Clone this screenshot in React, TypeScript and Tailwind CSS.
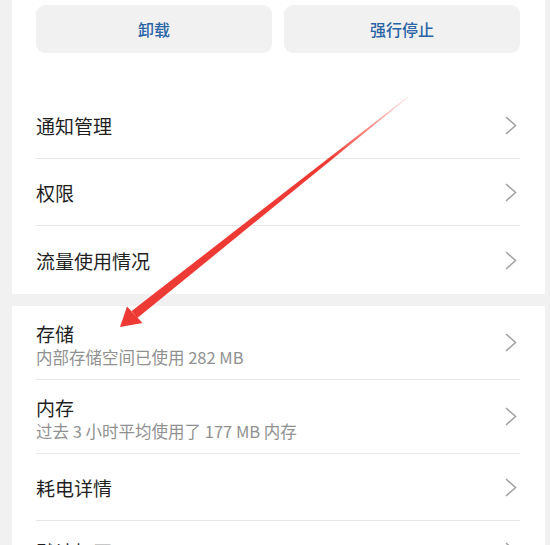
import React from "react";

const FONT = '"Noto Sans CJK SC", "Noto Sans", sans-serif';

function Chevron() {
  return (
    <svg width="12" height="19" viewBox="0 0 12 19" className="shrink-0 mr-[3px]">
      <polyline points="1,1 10.5,9.5 1,18" fill="none" stroke="#a3a3a3" strokeWidth="1.6" />
    </svg>
  );
}

type Row = { title: string; sub?: string; h: string; last?: boolean };

function SettingRow({ title, sub, h, last }: Row) {
  return (
    <div className={`flex items-center justify-between ${h} ${last ? "" : "border-b border-[#e8e8e8]"}`}>
      {sub ? (
        <div className="flex flex-col pt-[4px]">
          <span className="text-[19px] leading-[24px] text-[#1f1f1f]">{title}</span>
          <span className="text-[16.5px] leading-[22px] text-[#919191]">{sub}</span>
        </div>
      ) : (
        <span className="text-[19px] leading-[24px] text-[#1f1f1f] pt-[2px]">{title}</span>
      )}
      <Chevron />
    </div>
  );
}

function Arrow() {
  return (
    <svg className="absolute inset-0 pointer-events-none" width="550" height="545" viewBox="0 0 550 545">
      <defs>
        <linearGradient id="shaft" gradientUnits="userSpaceOnUse" x1="408" y1="97" x2="330" y2="160">
          <stop offset="0" stopColor="#ee3a34" stopOpacity="0.15" />
          <stop offset="1" stopColor="#ee3a34" stopOpacity="1" />
        </linearGradient>
      </defs>
      <polygon points="408.3,97.3 137.3,318 131.7,311 407.7,96.7" fill="url(#shaft)" />
      <polygon points="120,327 127,306.5 142.5,323" fill="#ee3a34" />
    </svg>
  );
}

export default function App() {
  const first: Row[] = [
    { title: "通知管理", h: "h-[67px]" },
    { title: "权限", h: "h-[67px]" },
    { title: "流量使用情况", h: "h-[68px]", last: true },
  ];
  const second: Row[] = [
    { title: "存储", sub: "内部存储空间已使用 282 MB", h: "h-[74px]" },
    { title: "内存", sub: "过去 3 小时平均使用了 177 MB 内存", h: "h-[74px]" },
    { title: "耗电详情", h: "h-[67px]" },
    { title: "默认打开", h: "h-[60px]", last: true },
  ];

  return (
    <div className="relative w-[550px] h-[545px] overflow-hidden bg-[#f1f1f1]" style={{ fontFamily: FONT }}>
      <div className="ml-[12px] w-[533px] bg-white pl-[24px] pr-[25px]">
        <div className="grid grid-cols-2 gap-[12px] pt-[5px] pb-[39px]">
          <button className="h-[48px] rounded-[9px] bg-[#f1f1f1] text-[16px] font-medium text-[#2a64a6]">卸载</button>
          <button className="h-[48px] rounded-[9px] bg-[#f1f1f1] text-[16px] font-medium text-[#2a64a6]">强行停止</button>
        </div>
        {first.map((r) => (
          <SettingRow key={r.title} {...r} />
        ))}
      </div>
      <div className="ml-[12px] mt-[12px] w-[533px] bg-white pl-[24px] pr-[25px]">
        {second.map((r) => (
          <SettingRow key={r.title} {...r} />
        ))}
      </div>
      <Arrow />
    </div>
  );
}
